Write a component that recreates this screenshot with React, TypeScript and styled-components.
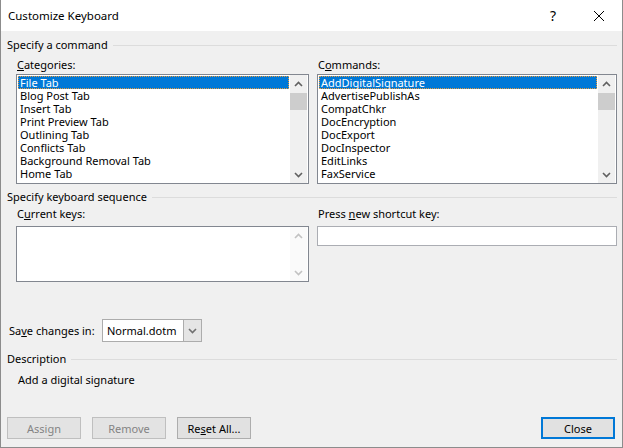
import styled, { createGlobalStyle } from 'styled-components';

const GlobalStyle = createGlobalStyle`
  html, body {
    margin: 0;
    padding: 0;
    background: #ffffff;
  }
  body {
    font-family: "Noto Sans", "Segoe UI", sans-serif;
    font-size: 11px;
    color: #000000;
  }
`;

const categories = [
  'File Tab',
  'Blog Post Tab',
  'Insert Tab',
  'Print Preview Tab',
  'Outlining Tab',
  'Conflicts Tab',
  'Background Removal Tab',
  'Home Tab',
];

const commands = [
  'AddDigitalSignature',
  'AdvertisePublishAs',
  'CompatChkr',
  'DocEncryption',
  'DocExport',
  'DocInspector',
  'EditLinks',
  'FaxService',
];

function Chevron({ up, color }: { up?: boolean; color: string }) {
  return (
    <svg width="9" height="6" viewBox="0 0 9 6">
      <path
        d={up ? 'M1 5 L4.5 1.5 L8 5' : 'M1 1 L4.5 4.5 L8 1'}
        fill="none"
        stroke={color}
        strokeWidth="1.6"
      />
    </svg>
  );
}

function ScrollBar({ disabled }: { disabled?: boolean }) {
  const color = disabled ? '#c2c2c2' : '#606060';
  return (
    <Track $disabled={disabled}>
      <ArrowButton>
        <Chevron up color={color} />
      </ArrowButton>
      {!disabled && <Thumb />}
      <TrackFill />
      <ArrowButton>
        <Chevron color={color} />
      </ArrowButton>
    </Track>
  );
}

function ListBox({ items }: { items: string[] }) {
  return (
    <ListFrame $height={110}>
      <Items>
        {items.map((item, i) => (
          <Item key={item} $selected={i === 0}>
            {item}
          </Item>
        ))}
      </Items>
      <ScrollBar />
    </ListFrame>
  );
}

function GroupHeader({ children }: { children: string }) {
  return (
    <HeaderRow>
      <span>{children}</span>
      <HeaderLine />
    </HeaderRow>
  );
}

export default function App() {
  return (
    <>
      <GlobalStyle />
      <Window>
        <TitleBar>
          <Title>Customize Keyboard</Title>
          <CaptionButton>?</CaptionButton>
          <CaptionButton>
            <svg width="12" height="12" viewBox="0 0 12 12">
              <path d="M1 1 L11 11 M11 1 L1 11" stroke="#000" strokeWidth="1" />
            </svg>
          </CaptionButton>
        </TitleBar>

        <Body>
          <GroupHeader>Specify a command</GroupHeader>
          <Columns $top={6}>
            <Field $gap={2}>
              <Label>
                <Key>C</Key>ategories:
              </Label>
              <ListBox items={categories} />
            </Field>
            <Field $gap={2}>
              <Label>
                C<Key>o</Key>mmands:
              </Label>
              <ListBox items={commands} />
            </Field>
          </Columns>

          <Spaced $top={6}>
            <GroupHeader>Specify keyboard sequence</GroupHeader>
          </Spaced>
          <Columns $top={3}>
            <Field $gap={5}>
              <Label>
                C<Key>u</Key>rrent keys:
              </Label>
              <ListFrame $height={56}>
                <Items />
                <ScrollBar disabled />
              </ListFrame>
            </Field>
            <Field $gap={5}>
              <Label>
                Press <Key>n</Key>ew shortcut key:
              </Label>
              <TextBox />
            </Field>
          </Columns>

          <SaveRow>
            <SaveLabel>
              Sa<Key>v</Key>e changes in:
            </SaveLabel>
            <Combo>
              <ComboValue>Normal.dotm</ComboValue>
              <ComboButton>
                <Chevron color="#707070" />
              </ComboButton>
            </Combo>
          </SaveRow>

          <Spaced $top={10}>
            <GroupHeader>Description</GroupHeader>
          </Spaced>
          <DescriptionText>Add a digital signature</DescriptionText>

          <ButtonRow>
            <Button disabled>Assign</Button>
            <Button disabled>Remove</Button>
            <Button>
              Re<Key>s</Key>et All...
            </Button>
            <ButtonSpacer />
            <Button $default>Close</Button>
          </ButtonRow>
        </Body>
      </Window>
    </>
  );
}

const Window = styled.div`
  display: flex;
  flex-direction: column;
  width: 623px;
  height: 448px;
  box-sizing: border-box;
  border: 1px solid #8c8c8c;
  border-top: none;
  background: #f0f0f0;
`;

const TitleBar = styled.div`
  display: flex;
  align-items: center;
  height: 31px;
  flex-shrink: 0;
  background: #ffffff;
  padding-left: 7px;
`;

const Title = styled.div`
  flex: 1;
  font-size: 11.5px;
  line-height: 14px;
`;

const CaptionButton = styled.div`
  display: flex;
  width: 46px;
  height: 31px;
  align-items: center;
  justify-content: center;
  font-size: 14px;
  &:first-of-type {
    margin-right: 89px;
  }
`;

const Body = styled.div`
  display: flex;
  flex: 1;
  flex-direction: column;
  padding: 7px 5px 8px 6px;
`;

const HeaderRow = styled.div`
  display: flex;
  align-items: center;
  gap: 5px;
  height: 14px;
  line-height: 14px;
`;

const HeaderLine = styled.div`
  flex: 1;
  height: 1px;
  background: #dcdcdc;
`;

const Spaced = styled.div<{ $top: number }>`
  margin-top: ${({ $top }) => $top}px;
`;

const Columns = styled.div<{ $top: number }>`
  display: grid;
  grid-template-columns: 293px 300px;
  column-gap: 8px;
  margin-top: ${({ $top }) => $top}px;
  padding-left: 9px;
`;

const Field = styled.div<{ $gap: number }>`
  display: flex;
  flex-direction: column;
  gap: ${({ $gap }) => $gap}px;
`;

const Label = styled.div`
  height: 14px;
  line-height: 14px;
  padding-left: 1px;
`;

const Key = styled.span`
  text-decoration: underline;
`;

const ListFrame = styled.div<{ $height: number }>`
  display: flex;
  height: ${({ $height }) => $height}px;
  box-sizing: border-box;
  border: 1px solid #828790;
  background: #ffffff;
  padding: 0 1px 0 0;
`;

const Items = styled.div`
  flex: 1;
  padding: 1px 1px;
`;

const Item = styled.div<{ $selected?: boolean }>`
  height: 13px;
  line-height: 13px;
  padding-left: 2px;
  white-space: nowrap;
  box-sizing: border-box;
  background: ${({ $selected }) => ($selected ? '#0078d7' : 'transparent')};
  color: ${({ $selected }) => ($selected ? '#ffffff' : '#000000')};
  outline: ${({ $selected }) => ($selected ? '1px dotted #e89a3c' : 'none')};
  outline-offset: -1px;
`;

const Track = styled.div<{ $disabled?: boolean }>`
  display: flex;
  flex-direction: column;
  width: 17px;
  background: ${({ $disabled }) => ($disabled ? '#fafafa' : '#f0f0f0')};
`;

const ArrowButton = styled.div`
  display: flex;
  height: 17px;
  align-items: center;
  justify-content: center;
`;

const Thumb = styled.div`
  height: 17px;
  margin: 1px 0 0;
  background: #cdcdcd;
`;

const TrackFill = styled.div`
  flex: 1;
`;

const TextBox = styled.div`
  height: 20px;
  box-sizing: border-box;
  border: 1px solid #abadb3;
  background: #ffffff;
`;

const SaveRow = styled.div`
  display: flex;
  align-items: center;
  gap: 7px;
  margin-top: 37px;
  padding-left: 2px;
`;

const SaveLabel = styled.span`
  width: 86px;
  white-space: nowrap;
`;

const Combo = styled.div`
  display: flex;
  width: 100px;
  height: 23px;
  box-sizing: border-box;
  border: 1px solid #acacac;
  background: #ffffff;
`;

const ComboValue = styled.div`
  flex: 1;
  display: flex;
  align-items: center;
  padding-left: 4px;
  white-space: nowrap;
`;

const ComboButton = styled.div`
  display: flex;
  width: 17px;
  align-items: center;
  justify-content: center;
  background: #e5e5e5;
  border-left: 1px solid #acacac;
`;

const DescriptionText = styled.div`
  margin-top: 6px;
  padding-left: 11px;
  line-height: 15px;
`;

const ButtonRow = styled.div`
  display: flex;
  gap: 11px;
  margin-top: auto;
  margin-right: 2px;
`;

const ButtonSpacer = styled.div`
  flex: 1;
`;

const Button = styled.button<{ $default?: boolean }>`
  width: 74px;
  height: 22px;
  padding: 0;
  box-sizing: border-box;
  font-family: inherit;
  font-size: 11px;
  color: #000000;
  background: #e1e1e1;
  border: ${({ $default }) => ($default ? '2px solid #0078d7' : '1px solid #adadad')};
  &:disabled {
    color: #838383;
    background: #e3e3e3;
    border-color: #bfbfbf;
  }
`;
